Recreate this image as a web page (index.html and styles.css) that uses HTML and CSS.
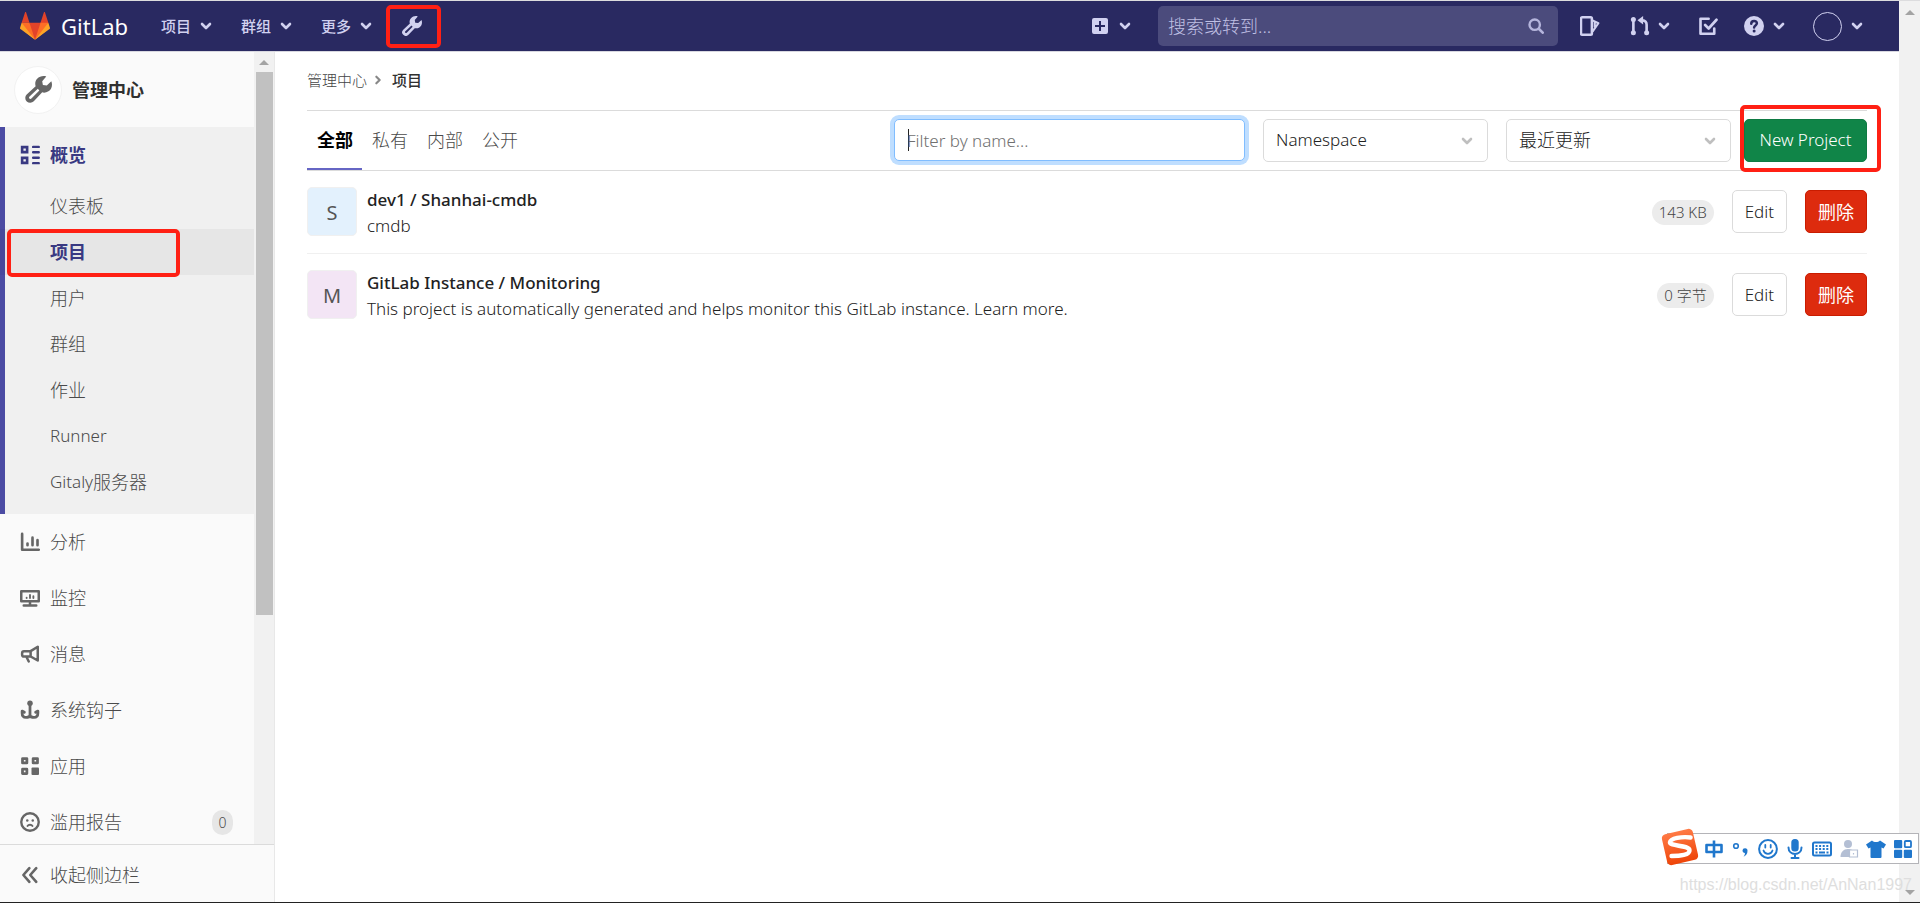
FILE: index.html
```
<!DOCTYPE html>
<html lang="zh-CN">
<head>
<meta charset="utf-8">
<title>项目 · 管理中心 · GitLab</title>
<link rel="stylesheet" href="styles.css">
</head>
<body>
<svg class="sprite" aria-hidden="true">
  <symbol id="chevron" viewBox="0 0 12 12"><path d="M2 4l4 4 4-4" fill="none" stroke="currentColor" stroke-width="2.600" stroke-linecap="round" stroke-linejoin="round"/></symbol>
  <symbol id="wrench" viewBox="0 0 16 16"><path fill="currentColor" fill-rule="evenodd" d="M12.6.3 10.200 3.100l.4 2.200 2.300.3 2.700-2.500c1 2.700 0 5-1.700 6-1.300.8-2.700.9-3.700.6L5.200 15A2.700 2.700 0 0 1 1 10.900L6.300 6C5.800 4.500 6.100 2.900 7.200 1.700 8.600.2 10.800-.3 12.600.3zM7.600 7.500l-4.900 4.700a.8.8 0 0 0 1.100 1.200L8.500 8.600z"/></symbol>
  <symbol id="overview" viewBox="0 0 16 16"><g fill="none" stroke="currentColor" stroke-width="2.100"><path d="M1.700 1.700h4v4h-4zM1.700 10.300h4v4h-4z"/><path d="M10.500 1.500H15M10.500 5.800H15M10.500 10.200H15M10.500 14.500H15" stroke-width="1.900" stroke-linecap="round"/></g></symbol>
  <symbol id="chart" viewBox="0 0 16 16"><g fill="none" stroke="currentColor" stroke-width="2.100" stroke-linecap="round" stroke-linejoin="round"><path d="M1.700 1.500v12.700H15M6 9.200v1.400M10 4.500v6.100M14 6.500v4.100"/></g></symbol>
  <symbol id="monitor" viewBox="0 0 16 16"><g fill="none" stroke="currentColor" stroke-width="2" stroke-linecap="round" stroke-linejoin="round"><path d="M1 2.600h14v8H1zM8 11v3M3 14h10"/><path d="M5.300 7.700v.3M8 5.500V8M10.700 6.600V8" stroke-width="1.500"/></g></symbol>
  <symbol id="horn" viewBox="0 0 16 16"><g fill="none" stroke="currentColor" stroke-width="2" stroke-linecap="round" stroke-linejoin="round"><path d="M14.200 2.200v11L8.500 10H3.200a1.500 1.500 0 0 1-1.500-1.500V7.200A1.500 1.500 0 0 1 3.200 5.700h5.300zM8.500 5.700V10M5 10l2 4"/></g></symbol>
  <symbol id="hook" viewBox="0 0 16 16"><circle cx="8" cy="2.500" r="2.200" fill="currentColor"/><path d="M8 3v10.500M8 11.500c0 3.400-6.300 3.400-6.300-1V8.800l1.800 1M8 11.500c0 3.400 6.300 3.400 6.300-1V8.800l-1.800 1" fill="none" stroke="currentColor" stroke-width="2.200" stroke-linecap="round" stroke-linejoin="round"/></symbol>
  <symbol id="apps" viewBox="0 0 16 16"><path d="M2 2h3.500v3.500H2zM10.500 2H14v3.500h-3.500zM2 10.500h3.500V14H2z" fill="none" stroke="currentColor" stroke-width="2.200" stroke-linejoin="round"/><rect x="9.200" y="9.200" width="6" height="6" rx=".8" fill="currentColor"/></symbol>
  <symbol id="sad" viewBox="0 0 16 16"><circle cx="8" cy="8" r="7" fill="none" stroke="currentColor" stroke-width="1.900"/><circle cx="5.800" cy="6.700" r="1" fill="currentColor"/><circle cx="10.200" cy="6.700" r="1" fill="currentColor"/><path d="M6 11.200c.8-1.300 3.200-1.300 4 0" fill="none" stroke="currentColor" stroke-width="1.500" stroke-linecap="round"/></symbol>
  <symbol id="collapse" viewBox="0 0 16 16"><path d="M7.500 2.500 2.700 8l4.800 5.500M13 2.500 8.200 8l4.800 5.500" fill="none" stroke="currentColor" stroke-width="2.100" stroke-linecap="round" stroke-linejoin="round"/></symbol>
  <symbol id="plus" viewBox="0 0 16 16"><path fill="currentColor" fill-rule="evenodd" d="M2 0h12a2 2 0 0 1 2 2v12a2 2 0 0 1-2 2H2a2 2 0 0 1-2-2V2a2 2 0 0 1 2-2zm5 3v4H3v2h4v4h2V9h4V7H9V3z"/></symbol>
  <symbol id="search" viewBox="0 0 16 16"><path d="M11 11l3.700 3.700" stroke="currentColor" stroke-width="2.600" stroke-linecap="round"/><circle cx="6.700" cy="6.700" r="5.200" fill="none" stroke="currentColor" stroke-width="2.400"/></symbol>
  <symbol id="issues" viewBox="0 0 16 16"><path d="M1.800 1h6.700a1 1 0 0 1 1 1v12a1 1 0 0 1-1 1H1.800a1 1 0 0 1-1-1V2a1 1 0 0 1 1-1z" fill="none" stroke="currentColor" stroke-width="2"/><path d="M10 3.500l4.700 2.300L10 12.500M11.800 5v4" fill="none" stroke="currentColor" stroke-width="1.700" stroke-linejoin="round"/></symbol>
  <symbol id="merge" viewBox="0 0 16 16"><g fill="currentColor"><circle cx="2.700" cy="2.700" r="2"/><circle cx="2.700" cy="13.300" r="2"/><circle cx="13.300" cy="13.300" r="2"/><path d="M10.500 0v6.800L6 3.400z"/></g><path d="M2.700 3v10M13.300 13V7c0-2.200-1-3.500-3.500-3.500" fill="none" stroke="currentColor" stroke-width="2.100"/></symbol>
  <symbol id="todo" viewBox="0 0 16 16"><g fill="none" stroke="currentColor" stroke-width="2.100" stroke-linecap="round" stroke-linejoin="round"><path d="M8.500 2.200H2v12h11V10"/><path d="M5.700 7.200l2.800 2.800L14.800 3"/></g></symbol>
  <symbol id="help" viewBox="0 0 16 16"><circle cx="8" cy="8" r="8" fill="currentColor"/><path d="M5.800 6.200c0-3 4.500-2.900 4.500-.3 0 1.700-2.200 1.600-2.200 3.300" fill="none" stroke="#292961" stroke-width="2" stroke-linecap="round"/><circle cx="8.100" cy="11.900" r="1.200" fill="#292961"/></symbol>
</svg>

<div class="screen">
  <div class="app">
    <header class="navbar">
      <a class="brand" href="#">
        <svg class="tanuki" viewBox="0 0 36 36" aria-hidden="true">
          <path fill="#e24329" d="M2 14l9.380 9v-9l-4-12.280c-.205-.632-1.176-.632-1.380 0zM34 14l-9.380 9v-9l4-12.280c.205-.632 1.176-.632 1.380 0zM18 34.380 3 14h30z"/>
          <path fill="#fc6d26" d="M18 34.380 11.380 14H2l4 11zM18 34.380 24.620 14H34l-4 11z"/>
          <path fill="#fca326" d="M2 14L.1 20.160c-.18.565 0 1.200.5 1.560l17.420 12.660zM34 14l1.900 6.160c.18.565 0 1.200-.5 1.560L18 34.380z"/>
        </svg>
        <span>GitLab</span>
      </a>
      <nav class="menus" aria-label="主导航">
        <button class="menu" type="button">项目<svg class="chev"><use href="#chevron"/></svg></button>
        <button class="menu" type="button">群组<svg class="chev"><use href="#chevron"/></svg></button>
        <button class="menu" type="button">更多<svg class="chev"><use href="#chevron"/></svg></button>
        <a class="admin-link marked" href="#" aria-label="管理中心"><svg class="icon"><use href="#wrench"/></svg></a>
      </nav>
      <div class="tools">
        <button class="tool" type="button" aria-label="新建"><svg class="icon-sm"><use href="#plus"/></svg><svg class="chev"><use href="#chevron"/></svg></button>
        <form class="search">
          <input type="search" placeholder="搜索或转到..." aria-label="搜索或转到">
          <svg class="icon-sm"><use href="#search"/></svg>
        </form>
        <a class="tool issues" href="#" aria-label="议题"><svg class="icon"><use href="#issues"/></svg></a>
        <button class="tool merge" type="button" aria-label="合并请求"><svg class="icon"><use href="#merge"/></svg><svg class="chev"><use href="#chevron"/></svg></button>
        <a class="tool todo" href="#" aria-label="待办事项"><svg class="icon"><use href="#todo"/></svg></a>
        <button class="tool help" type="button" aria-label="帮助"><svg class="icon"><use href="#help"/></svg><svg class="chev"><use href="#chevron"/></svg></button>
        <button class="tool user" type="button" aria-label="用户"><span class="user-avatar"></span><svg class="chev"><use href="#chevron"/></svg></button>
      </div>
    </header>

    <div class="body">
      <aside class="sidebar">
        <div class="side-scroll">
          <div class="side-content">
            <a class="side-title" href="#"><span class="side-avatar"><svg><use href="#wrench"/></svg></span>管理中心</a>
            <section class="side-section">
              <a class="side-item current" href="#"><svg class="icon"><use href="#overview"/></svg>概览</a>
              <a class="sub-item" href="#">仪表板</a>
              <a class="sub-item active marked" href="#">项目</a>
              <a class="sub-item" href="#">用户</a>
              <a class="sub-item" href="#">群组</a>
              <a class="sub-item" href="#">作业</a>
              <a class="sub-item latin" href="#">Runner</a>
              <a class="sub-item" href="#"><span class="latin">Gitaly</span>服务器</a>
            </section>
            <a class="side-item" href="#"><svg class="icon"><use href="#chart"/></svg>分析</a>
            <a class="side-item" href="#"><svg class="icon"><use href="#monitor"/></svg>监控</a>
            <a class="side-item" href="#"><svg class="icon"><use href="#horn"/></svg>消息</a>
            <a class="side-item" href="#"><svg class="icon"><use href="#hook"/></svg>系统钩子</a>
            <a class="side-item" href="#"><svg class="icon"><use href="#apps"/></svg>应用</a>
            <a class="side-item" href="#"><svg class="icon"><use href="#sad"/></svg>滥用报告<span class="count">0</span></a>
          </div>
          <div class="side-bar" aria-hidden="true"><span class="arrow-up"></span><span class="thumb"></span></div>
        </div>
        <button class="collapse" type="button"><svg class="icon"><use href="#collapse"/></svg>收起侧边栏</button>
      </aside>

      <main class="main">
        <nav class="crumbs" aria-label="面包屑"><a href="#">管理中心</a><svg><use href="#chevron"/></svg><a class="here" href="#">项目</a></nav>
        <div class="toolbar">
          <nav class="tabs" aria-label="可见性">
            <a class="tab selected" href="#">全部</a>
            <a class="tab" href="#">私有</a>
            <a class="tab" href="#">内部</a>
            <a class="tab" href="#">公开</a>
          </nav>
          <form class="filters">
            <input class="filter" type="text" placeholder="Filter by name..." aria-label="Filter by name">
            <div class="dropdown"><select class="latin" aria-label="Namespace"><option>Namespace</option></select><svg><use href="#chevron"/></svg></div>
            <div class="dropdown"><select aria-label="排序"><option>最近更新</option></select><svg><use href="#chevron"/></svg></div>
            <div class="new marked"><button class="btn btn-new" type="button">New Project</button></div>
          </form>
        </div>
        <ul class="projects">
          <li class="project">
            <span class="avatar blue">S</span>
            <div class="info"><a class="name" href="#">dev1 / Shanhai-cmdb</a><p>cmdb</p></div>
            <div class="actions"><span class="badge">143 KB</span><button class="btn" type="button">Edit</button><button class="btn btn-delete" type="button">删除</button></div>
          </li>
          <li class="project">
            <span class="avatar purple">M</span>
            <div class="info"><a class="name" href="#">GitLab Instance / Monitoring</a><p>This project is automatically generated and helps monitor this GitLab instance. Learn more.</p></div>
            <div class="actions"><span class="badge">0 字节</span><button class="btn" type="button">Edit</button><button class="btn btn-delete" type="button">删除</button></div>
          </li>
        </ul>
      </main>
    </div>
  </div>
  <div class="page-bar" aria-hidden="true"><span class="arrow-up"></span><span class="arrow-down"></span></div>

  <div class="ime">
    <svg class="ime-logo" viewBox="0 0 36 36" aria-hidden="true">
      <defs><linearGradient id="flame" x1="0" y1="0" x2="0" y2="1"><stop offset="0" stop-color="#ff7a45"/><stop offset="1" stop-color="#ee4408"/></linearGradient></defs>
      <rect x="3" y="3" width="30" height="30" rx="4" fill="url(#flame)" transform="rotate(-13 18 18)"/>
      <path d="M28 9C20 8 9 9.500 8.500 13.500c-.4 4 18 2.500 18.500 7.500.4 4.500-9 5.500-17 5.500" fill="none" stroke="#fff" stroke-width="4.200" stroke-linecap="round"/>
    </svg>
    <svg class="ime-icon" viewBox="0 0 20 20"><path d="M2.500 6h15v7h-15zM10 1.500v17" fill="none" stroke="currentColor" stroke-width="2.600" stroke-linejoin="round"/></svg>
    <svg class="ime-icon" viewBox="0 0 20 20"><circle cx="5" cy="7" r="2.300" fill="none" stroke="currentColor" stroke-width="1.600"/><path d="M11.500 11.500a2.500 2.500 0 1 1 5 .3c0 3.200-1.500 5-4 6 1.200-1.500 1.500-2.500 1.400-3.800-1.400 0-2.400-1-2.400-2.500z" fill="currentColor"/></svg>
    <svg class="ime-icon" viewBox="0 0 20 20"><circle cx="10" cy="10" r="8.900" fill="none" stroke="currentColor" stroke-width="2"/><path d="M7.300 6v2.500M12.700 6v2.500M5.500 11.500c1.500 4.500 7.500 4.500 9 0" fill="none" stroke="currentColor" stroke-width="1.800" stroke-linecap="round"/></svg>
    <svg class="ime-icon" viewBox="0 0 20 20"><rect x="6.300" y="0" width="7.400" height="12.500" rx="3.500" fill="currentColor"/><path d="M3.500 8.500c0 8.500 13 8.500 13 0M10 15v4M6.500 19h7" fill="none" stroke="currentColor" stroke-width="2" stroke-linecap="round"/></svg>
    <svg class="ime-icon" viewBox="0 0 20 20"><rect x="1" y="3.500" width="18" height="13" rx="1.500" fill="none" stroke="currentColor" stroke-width="2"/><path d="M3.500 7h13M3.500 10h13" stroke="currentColor" stroke-width="1.800" stroke-dasharray="2 1.600"/><path d="M3.500 13.500h2M7 13.500h6M14.500 13.500h2" stroke="currentColor" stroke-width="1.800"/></svg>
    <svg class="ime-icon muted" viewBox="0 0 20 20"><circle cx="9" cy="5" r="4" fill="currentColor"/><path d="M1.500 18c0-5 3-8 7.500-8 3 0 5 1 6 3v5z" fill="currentColor"/><path d="M10.500 11h8v7h-8zM14.500 14v1.500" fill="#fff" stroke="currentColor" stroke-width="1.200"/></svg>
    <svg class="ime-icon" viewBox="0 0 20 20"><path d="M6 1.500c2 2 6 2 8 0l6 4-2.500 4-2-1V18a1 1 0 0 1-1 1H5.500a1 1 0 0 1-1-1V8.500l-2 1L0 5.500z" fill="currentColor"/></svg>
    <svg class="ime-icon" viewBox="0 0 20 20"><g fill="currentColor"><rect x="1" y="1" width="8.200" height="8.200" rx="1"/><rect x="1" y="10.800" width="8.200" height="8.200" rx="1"/><rect x="10.800" y="10.800" width="8.200" height="8.200" rx="1"/></g><rect x="11.800" y="2" width="6.200" height="6.200" rx="1" fill="none" stroke="currentColor" stroke-width="1.800"/></svg>
  </div>
  <p class="watermark">https://blog.csdn.net/AnNan1997</p>
</div>
</body>
</html>
```
FILE: styles.css
```
* { box-sizing: border-box; }

body {
  margin: 0;
  color: #222;
  background: #fff;
  font: 300 18px/26px "Noto Sans", "Noto Sans CJK SC", sans-serif;
}

a { color: inherit; text-decoration: none; }
button, input, select { font: inherit; color: inherit; margin: 0; }
button { border: 0; padding: 0; background: none; cursor: pointer; }
p, ul { margin: 0; padding: 0; list-style: none; }

.sprite { position: absolute; width: 0; height: 0; }
.icon { width: 20px; height: 20px; flex: none; }
.icon-sm { width: 16px; height: 16px; flex: none; }
.chev { width: 12px; height: 12px; flex: none; }
.latin { font-size: 17px; }

.screen {
  position: relative;
  display: flex;
  height: 100vh;
  border-top: 1px solid #dcdcde;
  border-bottom: 1px solid #222;
  overflow: hidden;
}

.app { flex: 1; min-width: 0; display: flex; flex-direction: column; }

/* red call-out frames */
.marked { position: relative; }
.marked::after {
  content: "";
  position: absolute;
  border: 4px solid #ff2014;
  border-radius: 5px;
  pointer-events: none;
}

/* top bar */
.navbar {
  flex: none;
  height: 51px;
  display: flex;
  align-items: center;
  padding: 0 36px 0 20px;
  background: #292961;
  border-bottom: 1px solid #d8d8e0;
  color: #d1d1f0;
}
.brand { display: flex; align-items: center; gap: 11px; color: #fff; font-size: 22px; font-weight: 400; }
.tanuki { width: 30px; height: 30px; }
.menus { display: flex; align-items: center; gap: 29px; margin-left: 33px; }
.menu { display: flex; align-items: center; gap: 9px; font-size: 15px; font-weight: 500; }
.admin-link { display: flex; margin-left: 1px; }
.admin-link.marked::after { inset: -11px -19px -12px -16px; }
.tools { display: flex; align-items: center; margin-left: auto; }
.tool { display: flex; align-items: center; gap: 11px; }
.search {
  display: flex;
  align-items: center;
  width: 400px;
  height: 40px;
  margin: 0 22px 0 27px;
  padding: 0 14px 0 10px;
  border-radius: 5px;
  background: #4b4b7c;
  color: #b5b5dc;
}
.search input { flex: 1; min-width: 0; padding: 0; border: 0; outline: 0; background: none; }
.search input::placeholder { color: #c0c0e4; opacity: 1; }
.merge { margin-left: 30px; gap: 8px; }
.todo { margin-left: 28px; }
.help { margin-left: 26px; gap: 9px; }
.user { margin-left: 28px; gap: 9px; }
.user-avatar { width: 29px; height: 29px; border: 1px solid #d1d1f0; border-radius: 50%; }

.body { flex: 1; min-height: 0; display: flex; }

/* sidebar */
.sidebar {
  width: 275px;
  flex: none;
  display: flex;
  flex-direction: column;
  background: #fafafa;
  border-right: 1px solid #e8e8e8;
  color: #4a4a4a;
}
.sidebar .icon { color: #666; }
.side-scroll { flex: 1; min-height: 0; display: flex; overflow: hidden; }
.side-content { flex: 1; }
.side-title { display: flex; align-items: center; gap: 10px; height: 75px; padding-left: 14px; color: #303030; font-weight: 700; }
.side-avatar {
  display: flex;
  align-items: center;
  justify-content: center;
  width: 48px;
  height: 48px;
  border: 1px solid #f2f2f2;
  border-radius: 50%;
  background: #fff;
  color: #666;
}
.side-avatar svg { width: 27px; height: 27px; }
.side-section { padding-bottom: 9px; background: #f0f0f0; box-shadow: inset 5px 0 #4b4ba3; }
.side-item { display: flex; align-items: center; gap: 10px; height: 56px; padding: 0 21px 0 20px; }
.side-item.current, .side-item.current .icon { color: #393982; font-weight: 700; }
.sub-item { display: flex; align-items: center; height: 46px; padding-left: 50px; }
.sub-item.active { background: rgba(0, 0, 0, .04); color: #393982; font-weight: 700; }
.sub-item.marked::after { inset: 0 74px -2px 7px; }
.count { margin-left: auto; width: 21px; border-radius: 12px; background: #e6e6e6; font-size: 14px; line-height: 25px; text-align: center; }
.side-bar { width: 20px; display: flex; flex-direction: column; align-items: center; gap: 7px; padding-top: 8px; background: #f1f1f1; }
.thumb { width: 17px; height: 543px; background: #c1c1c1; }
.arrow-up, .arrow-down { border: 5px solid transparent; border-top-width: 0; border-bottom: 5px solid #a3a3a3; }
.arrow-down { transform: rotate(180deg); }
.collapse { display: flex; align-items: center; gap: 10px; height: 58px; padding: 2px 0 0 20px; border-top: 1px solid #dbdbdb; }

/* main column */
.main { flex: 1; min-width: 0; padding: 0 32px; }
.crumbs { display: flex; align-items: center; height: 59px; padding-bottom: 2px; border-bottom: 1px solid #dbdbdb; font-size: 15px; color: #444; }
.crumbs svg { width: 10px; height: 10px; margin: 0 7px 0 6px; transform: rotate(-90deg); color: #888; }
.crumbs .here { margin-left: 2px; color: #303030; font-weight: 500; }
.toolbar { display: flex; justify-content: space-between; align-items: stretch; height: 60px; border-bottom: 1px solid #dbdbdb; }
.tabs { display: flex; }
.tab { display: flex; align-items: center; padding: 0 9px 2px 10px; color: #4a4a4a; }
.tab.selected { border-bottom: 2px solid #6666c4; padding-bottom: 0; color: #000; font-weight: 700; }
.filters { display: flex; align-items: center; gap: 18px; padding-bottom: 1px; }
.filter {
  width: 351px;
  height: 42px;
  padding: 1px 12px 0;
  border: 1px solid #80bdff;
  border-radius: 5px;
  outline: 0;
  box-shadow: 0 0 0 4px #bfdeff;
  background: linear-gradient(#222, #222) 13px 9px / 1px 22px no-repeat #fff;
  font-size: 17px;
}
.filter::placeholder { color: #707070; opacity: 1; }
.dropdown { position: relative; width: 225px; height: 43px; }
.dropdown select {
  width: 100%;
  height: 100%;
  padding: 0 36px 0 12px;
  appearance: none;
  border: 1px solid #dbdbdb;
  border-radius: 5px;
  background: #fff;
}
.dropdown svg { position: absolute; right: 15px; top: 16px; width: 12px; height: 12px; color: #bfbfbf; pointer-events: none; }
.new { margin-left: -5px; }
.new.marked::after { inset: -14px -14px -10px -4px; }

.btn { height: 43px; padding: 0 12px; border: 1px solid #dbdbdb; border-radius: 5px; background: #fff; font-size: 17px; white-space: nowrap; }
.btn-new { min-width: 123px; border-color: #0e7a43; background: #108548; color: #fff; }
.btn-delete { padding: 0 12px; border-color: #c91c00; background: #dd2b0e; color: #fff; font-size: 18px; font-weight: 400; }

.project { display: flex; align-items: flex-start; height: 83px; padding-top: 16px; border-bottom: 1px solid #f0f0f0; }
.project:last-child { border-bottom-color: transparent; }
.avatar { width: 50px; height: 49px; flex: none; border: 1px solid #f0f0f0; border-radius: 5px; color: #555; font-size: 20px; font-weight: 400; line-height: 50px; text-align: center; }
.blue { background: #e3f1fd; }
.purple { background: #f3e5f5; }
.info { flex: 1; margin-left: 10px; font-size: 17px; }
.name { display: block; font-weight: 500; }
.actions { display: flex; align-items: center; gap: 18px; padding-top: 3px; }
.badge { margin-top: 2px; padding: 0 7px; border-radius: 13px; background: #ececec; color: #444; font-size: 15px; line-height: 25px; }

/* window scrollbar */
.page-bar { width: 21px; flex: none; display: flex; flex-direction: column; justify-content: space-between; align-items: center; padding: 9px 0 7px; background: #f1f1f1; }

/* floating input-method strip */
.ime {
  position: absolute;
  right: 1px;
  bottom: 38px;
  display: flex;
  align-items: center;
  gap: 7px;
  height: 31px;
  padding-right: 5px;
  border: 1px solid #b4b4b8;
  background: #fff;
  color: #2077cc;
}
.ime-logo { width: 38px; height: 38px; margin: -3px -2px 0 -7px; }
.ime-icon { width: 20px; height: 20px; }
.ime-icon.muted { color: #b4bfd4; }

.watermark { position: absolute; right: 8px; bottom: 4px; color: #dedede; font: 16px/26px "Liberation Sans", sans-serif; }
```
